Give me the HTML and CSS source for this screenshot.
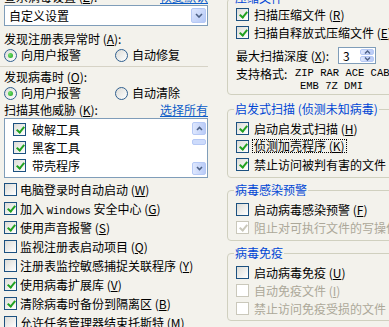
FILE: index.html
```html
<!DOCTYPE html>
<html lang="zh-CN">
<head>
    <meta charset="UTF-8">
    <title>查杀设置</title>
    <link rel="stylesheet" href="styles.css">
</head>
<body>
<div class="page">
    <div class="left">
        <div class="head"><span>查杀病毒设置 (<u>Z</u>):</span><a class="link">恢复默认</a></div>
        <div class="select">
            <span class="select-text">自定义设置</span>
            <span class="drop"><svg width="8" height="5" viewBox="0 0 8 5"><polyline points="1,1 4,4 7,1" fill="none" stroke="#4d6185" stroke-width="1.6"/></svg></span>
        </div>
        <div class="label label-a">发现注册表异常时 (<u>A</u>):</div>
        <div class="radios">
            <div class="opt first"><span class="radio on"></span><span>向用户报警</span></div>
            <div class="opt"><span class="radio"></span><span>自动修复</span></div>
        </div>
        <div class="sep"></div>
        <div class="label label-o">发现病毒时 (<u>O</u>):</div>
        <div class="radios">
            <div class="opt first"><span class="radio on"></span><span>向用户报警</span></div>
            <div class="opt"><span class="radio"></span><span>自动清除</span></div>
        </div>
        <div class="label label-k"><span>扫描其他威胁 (<u>K</u>):</span><a class="link">选择所有</a></div>
        <div class="list">
            <div class="items">
                <div class="item"><span class="cb on"></span><span>破解工具</span></div>
                <div class="item"><span class="cb on"></span><span>黑客工具</span></div>
                <div class="item"><span class="cb on"></span><span>带壳程序</span></div>
                <div class="item"><span class="cb"></span><span>广告程序</span></div>
            </div>
            <div class="scroll">
                <span class="sbtn"><svg width="7" height="5" viewBox="0 0 7 5"><polyline points="1,4 3.5,1.5 6,4" fill="none" stroke="#4d6185" stroke-width="1.6"/></svg></span>
                <span class="thumb"></span>
                <span class="sbtn down"><svg width="7" height="5" viewBox="0 0 7 5"><polyline points="1,1 3.5,3.5 6,1" fill="none" stroke="#4d6185" stroke-width="1.6"/></svg></span>
            </div>
        </div>
        <div class="checks">
            <div class="chk"><span class="cb"></span><span>电脑登录时自动启动 (<u>W</u>)</span></div>
            <div class="chk"><span class="cb on"></span><span>加入 <span class="mono">Windows</span> 安全中心 (<u>G</u>)</span></div>
            <div class="chk"><span class="cb on"></span><span>使用声音报警 (<u>S</u>)</span></div>
            <div class="chk"><span class="cb"></span><span>监视注册表启动项目 (<u>Q</u>)</span></div>
            <div class="chk"><span class="cb"></span><span>注册表监控敏感捕捉关联程序 (<u>Y</u>)</span></div>
            <div class="chk"><span class="cb on"></span><span>使用病毒扩展库 (<u>V</u>)</span></div>
            <div class="chk"><span class="cb on"></span><span>清除病毒时备份到隔离区 (<u>B</u>)</span></div>
            <div class="chk"><span class="cb"></span><span>允许任务管理器结束托斯特 (<u>M</u>)</span></div>
        </div>
    </div>

    <div class="right">
        <div class="grp grp1">
            <div class="grp-title">压缩文件</div>
            <div class="row"><span class="cb on"></span><span>扫描压缩文件 (<u>R</u>)</span></div>
            <div class="row"><span class="cb on"></span><span>扫描自释放式压缩文件 (<u>E</u>)</span></div>
            <div class="spin-row">
                <span class="spin-label">最大扫描深度 (<u>X</u>):</span>
                <span class="spin">
                    <span class="spin-val">3</span>
                    <span class="spin-btns">
                        <span class="sp"><svg width="7" height="4" viewBox="0 0 7 4"><polyline points="1,3.5 3.5,1 6,3.5" fill="none" stroke="#4d6185" stroke-width="1.4"/></svg></span>
                        <span class="sp"><svg width="7" height="4" viewBox="0 0 7 4"><polyline points="1,0.5 3.5,3 6,0.5" fill="none" stroke="#4d6185" stroke-width="1.4"/></svg></span>
                    </span>
                </span>
            </div>
            <div class="formats">
                <span class="fmt-label">支持格式:</span>
                <span class="fmt-list">
                    <span class="mono">ZIP RAR ACE CAB ARJ</span>
                    <span class="mono second">EMB 7Z DMI</span>
                </span>
            </div>
        </div>

        <div class="grp grp2">
            <div class="grp-title">启发式扫描 (侦测未知病毒)</div>
            <div class="row"><span class="cb on"></span><span>启动启发式扫描 (<u>H</u>)</span></div>
            <div class="row"><span class="cb on"></span><span class="focus">侦测加壳程序 (<u>K</u>)</span></div>
            <div class="row"><span class="cb on"></span><span>禁止访问被判有害的文件</span></div>
        </div>

        <div class="grp grp3">
            <div class="grp-title">病毒感染预警</div>
            <div class="row"><span class="cb"></span><span>启动病毒感染预警 (<u>F</u>)</span></div>
            <div class="row dis"><span class="cb on"></span><span>阻止对可执行文件的写操作</span></div>
        </div>

        <div class="grp grp4">
            <div class="grp-title">病毒免疫</div>
            <div class="row"><span class="cb"></span><span>启动病毒免疫 (<u>U</u>)</span></div>
            <div class="row dis"><span class="cb"></span><span>自动免疫文件 (<u>I</u>)</span></div>
            <div class="row dis"><span class="cb"></span><span>禁止访问免疫受损的文件</span></div>
        </div>
    </div>
</div>
</body>
</html>
```

FILE: styles.css
```css
* {
    margin: 0;
    padding: 0;
    box-sizing: border-box;
}

html, body {
    height: 100%;
}

body {
    font-family: "Noto Sans CJK SC", "Liberation Sans", sans-serif;
    font-size: 12px;
    color: #000;
    background-color: #f3f2ec;
    overflow: hidden;
    white-space: nowrap;
}

.page {
    display: flex;
    align-items: flex-start;
}

.mono {
    font-family: "Liberation Mono", monospace;
    font-size: 10.5px;
}

.link {
    color: #0b5cc8;
    text-decoration: underline;
}

/* left column */
.left {
    width: 204px;
    margin: -10px 0 0 4px;
    flex-shrink: 0;
}

.head {
    display: flex;
    justify-content: space-between;
    line-height: 14px;
    height: 14px;
}

.select {
    display: flex;
    align-items: center;
    height: 21px;
    margin-top: 1px;
    padding-left: 4px;
    border: 1px solid #7f9db9;
    background-color: #fff;
}
.select-text {
    flex: 1;
}
.drop {
    display: flex;
    align-items: center;
    justify-content: center;
    width: 15px;
    height: 15px;
    margin-right: 1px;
    border: 1px solid #b6c9f5;
    border-radius: 2px;
    background: linear-gradient(135deg, #dfe8fe, #b4c8f6);
}

.label {
    line-height: 16px;
}
.label-a {
    margin-top: 5px;
}
.label-o {
    margin-top: 2px;
}
.label-k {
    display: flex;
    justify-content: space-between;
    margin-top: 1px;
}

.radios {
    display: flex;
    line-height: 16px;
}
.opt {
    display: flex;
    align-items: center;
}
.opt.first {
    width: 111px;
}

.radio {
    position: relative;
    width: 13px;
    height: 13px;
    margin-right: 4px;
    border: 1px solid #2f5f8f;
    border-radius: 50%;
    background: linear-gradient(135deg, #dcdcd7, #fff);
    flex-shrink: 0;
}
.radio.on::after {
    content: "";
    position: absolute;
    left: 3px;
    top: 3px;
    width: 5px;
    height: 5px;
    border-radius: 50%;
    background: radial-gradient(circle at 35% 35%, #6fe06b, #21a121);
}

.cb {
    position: relative;
    width: 13px;
    height: 13px;
    border: 1px solid #1c5180;
    background: linear-gradient(135deg, #dcdcd7, #fff);
    flex-shrink: 0;
}
.cb.on::after {
    content: "";
    position: absolute;
    left: 3.5px;
    top: 1px;
    width: 3px;
    height: 6px;
    border: solid #21a121;
    border-width: 0 2px 2px 0;
    transform: rotate(40deg);
}

.sep {
    width: 208px;
    margin: 3px 0 0 -4px;
    border-top: 1px solid #d6d3c6;
}

.list {
    display: flex;
    height: 60px;
    border: 1px solid #7f9db9;
    background-color: #fff;
    overflow: hidden;
}
.items {
    flex: 1;
    padding: 1px 0 0 8px;
}
.item {
    display: flex;
    align-items: center;
    height: 18px;
}
.item .cb {
    margin-right: 6px;
}
.scroll {
    display: flex;
    flex-direction: column;
    width: 14px;
    margin: 3px 1px 2px 0;
}
.sbtn {
    display: flex;
    align-items: center;
    justify-content: center;
    height: 13px;
    border: 1px solid #b6c9f5;
    border-radius: 2px;
    background: linear-gradient(90deg, #dfe8fe, #b9cbf7);
}
.sbtn.down {
    margin-top: auto;
}
.thumb {
    height: 6px;
    margin-top: 4px;
    border: 1px solid #b6c9f5;
    border-radius: 2px;
    background-color: #cddbfb;
}

.checks {
    margin-top: 2px;
}
.chk {
    display: flex;
    align-items: center;
    height: 19px;
}
.chk .cb {
    margin-right: 3px;
}

/* right column: group boxes */
.right {
    width: 200px;
    margin: -2px 0 0 19px;
    flex-shrink: 0;
}

.grp {
    border: 1px solid #d0d0bf;
    border-radius: 4px;
    padding: 0 0 3px 8px;
}
.grp-title {
    display: table;
    margin: -8px 0 0 -2px;
    padding: 0 1px;
    line-height: 14px;
    color: #0046d5;
    background-color: #f3f2ec;
}
.grp1 {
    padding-bottom: 1px;
}
.grp2 {
    margin-top: 14px;
    padding-bottom: 4px;
}
.grp3 {
    margin-top: 12px;
    padding-bottom: 4px;
}
.grp4 {
    margin-top: 12px;
}
.grp2 .grp-title,
.grp3 .grp-title,
.grp4 .grp-title {
    margin-bottom: 3px;
}

.row {
    display: flex;
    align-items: center;
    height: 18px;
}
.row .cb {
    margin-right: 5px;
}
.row.dis {
    color: #aca899;
}
.row.dis .cb {
    border-color: #cac8bb;
    background: #fff;
}
.row.dis .cb.on::after {
    border-color: #cac8bb;
}

.focus {
    line-height: 12px;
    padding: 0 1px;
    margin-left: -2px;
    border: 1px dotted #000;
}

.spin-row {
    display: flex;
    align-items: center;
    height: 18px;
    margin-top: 5px;
}
.spin-label {
    width: 102px;
}
.spin {
    display: flex;
    width: 38px;
    height: 17px;
    padding-left: 4px;
    border: 1px solid #7f9db9;
    background-color: #fff;
}
.spin-val {
    flex: 1;
    line-height: 15px;
}
.spin-btns {
    display: flex;
    flex-direction: column;
    gap: 1px;
    width: 14px;
    margin: 1px 1px 1px 0;
}
.sp {
    display: flex;
    align-items: center;
    justify-content: center;
    flex: 1;
    border: 1px solid #b6c9f5;
    border-radius: 2px;
    background: linear-gradient(90deg, #dfe8fe, #b9cbf7);
}

.formats {
    display: flex;
    margin-top: 3px;
    line-height: 13px;
}
.fmt-label {
    width: 59px;
}
.fmt-list {
    display: flex;
    flex-direction: column;
}
.fmt-list .second {
    padding-left: 5px;
}
```
